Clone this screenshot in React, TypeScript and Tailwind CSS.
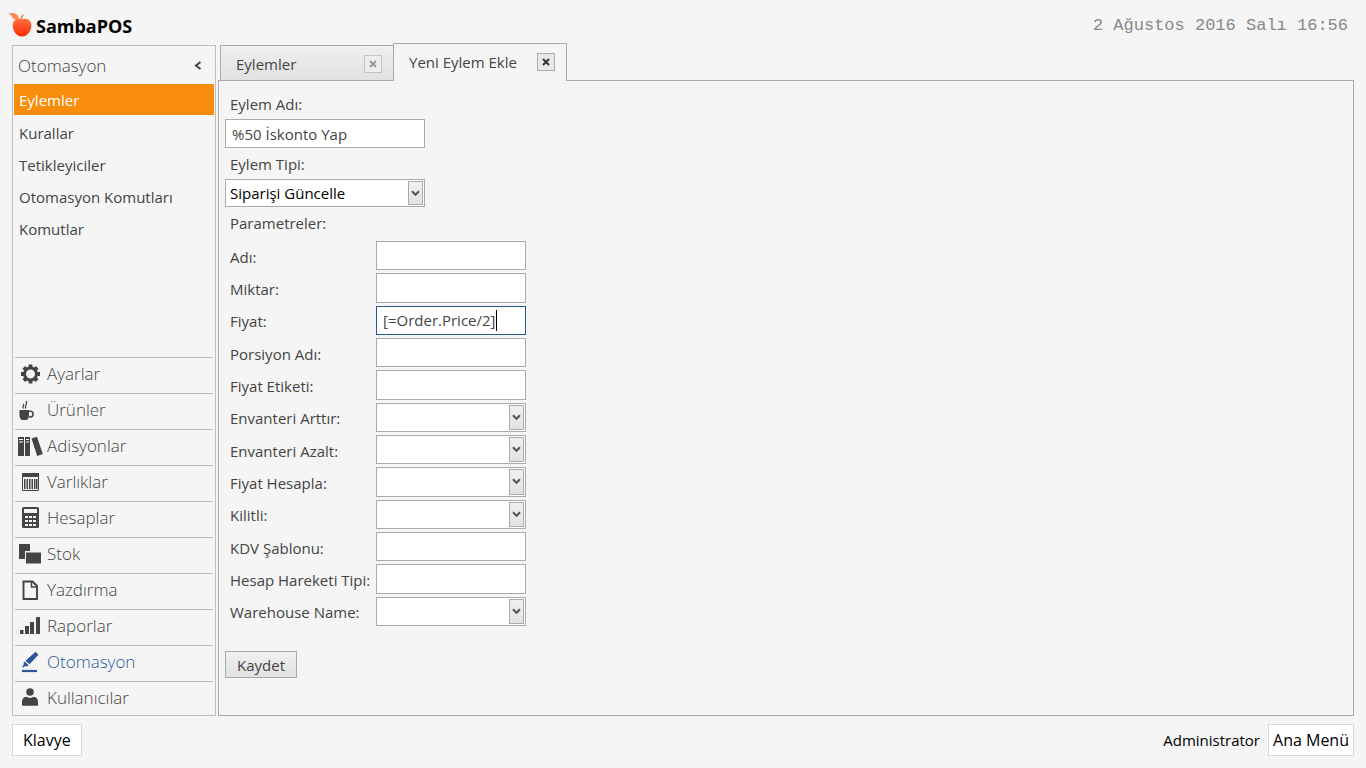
import { useState } from "react";
import type { ReactNode } from "react";

const menuItems = ["Eylemler", "Kurallar", "Tetikleyiciler", "Otomasyon Komutları", "Komutlar"];

const categories: { name: string; icon: ReactNode }[] = [
    {
        name: "Ayarlar",
        icon: (
            <>
                <circle cx="13.5" cy="12" r="6" fill="none" stroke="currentColor" strokeWidth="3" />
                <path
                    d="M13.5 2.500v3M13.5 18.500v3M4 12h3M20 12h3M6.800 5.300l2 2M18.200 16.700l2 2M6.800 18.700l2-2M18.200 7.300l2-2"
                    stroke="currentColor"
                    strokeWidth="3.800"
                />
            </>
        ),
    },
    {
        name: "Ürünler",
        icon: (
            <>
                <path d="M2.500 12H12v5.500q0 2.800-2 4.500H4.500q-2-1.700-2-4.500z" fill="currentColor" />
                <path d="M12 13.200h1.500a2.600 2.900 0 0 1 0 5.800H12" fill="none" stroke="currentColor" strokeWidth="1.500" />
                <path d="M6.500 10.500c-2.200-2 1.500-2.500-.2-4.500M9 10.500c-2.400-2.600 2-3.500.3-7.500" fill="none" stroke="currentColor" strokeWidth="1.300" />
            </>
        ),
    },
    {
        name: "Adisyonlar",
        icon: (
            <>
                <path d="M1 3h6v19H1zM8 3h5v19H8z" fill="currentColor" />
                <path d="M14.500 4.500l5.500-1.700L25.800 20l-5.600 2z" fill="currentColor" />
                <path d="M2 5.500h4M2 8h4M9 5.500h3M9 8h3" stroke="#f5f5f5" strokeWidth="1" />
            </>
        ),
    },
    {
        name: "Varlıklar",
        icon: (
            <>
                <path d="M5.500 3.500h16v17h-16z" fill="none" stroke="currentColor" strokeWidth="1" />
                <path d="M5 3h17v4H5z" fill="currentColor" />
                <path d="M7.750 9v10M10.250 9v10M12.750 9v10M15.250 9v10M17.750 9v10M19.750 9v10" stroke="currentColor" strokeWidth="1.500" />
            </>
        ),
    },
    {
        name: "Hesaplar",
        icon: (
            <>
                <rect x="5" y="1" width="17" height="21" rx="1.500" fill="currentColor" />
                <path
                    d="M7 3h13v4H7zM8 10h3v2H8zM12 10h3v2h-3zM16 10h3v2h-3zM8 14h3v2H8zM12 14h3v2h-3zM16 14h3v2h-3zM8 18h3v2H8zM12 18h3v2h-3zM16 18h3v2h-3z"
                    fill="#f5f5f5"
                />
            </>
        ),
    },
    {
        name: "Stok",
        icon: (
            <>
                <path d="M2 2h11v7H8v8H2z" fill="currentColor" />
                <path d="M9 10.500h15v11H9z" fill="currentColor" />
            </>
        ),
    },
    {
        name: "Yazdırma",
        icon: (
            <>
                <path d="M6.500 3.500h9L20 8v13H6.500z" fill="none" stroke="currentColor" strokeWidth="1.900" />
                <path d="M14.500 3.500V9H20" fill="none" stroke="currentColor" strokeWidth="1.500" />
            </>
        ),
    },
    {
        name: "Raporlar",
        icon: <path d="M3 16h3.500v4H3zM8 12h4v8H8zM13 8h4v12h-4zM19 3h4v17h-4z" fill="currentColor" />,
    },
    {
        name: "Otomasyon",
        icon: (
            <>
                <path d="M18.500 1.800l3 3-9 9.500-4-3.500z" fill="currentColor" />
                <path d="M7.800 11.600l3.800 3.600-1.400 1.200-1.700-.4-2.500 1.600-.8-.8 1.600-2.400-.2-1.600z" fill="currentColor" />
                <path d="M5 21h15" stroke="currentColor" strokeWidth="2.200" />
            </>
        ),
    },
    {
        name: "Kullanıcılar",
        icon: (
            <>
                <circle cx="13" cy="6" r="3.800" fill="currentColor" />
                <path d="M5 19.700v-3.700q0-4.500 4.200-5.200 3.800 2.200 7.600 0 4.200.7 4.200 5.200v3.700z" fill="currentColor" />
            </>
        ),
    },
];

const params = [
    { id: "adi", label: "Adı:", type: "text" },
    { id: "miktar", label: "Miktar:", type: "text" },
    { id: "fiyat", label: "Fiyat:", type: "text", active: true },
    { id: "porsiyon", label: "Porsiyon Adı:", type: "text" },
    { id: "etiket", label: "Fiyat Etiketi:", type: "text" },
    { id: "arttir", label: "Envanteri Arttır:", type: "select" },
    { id: "azalt", label: "Envanteri Azalt:", type: "select" },
    { id: "hesapla", label: "Fiyat Hesapla:", type: "select" },
    { id: "kilitli", label: "Kilitli:", type: "select" },
    { id: "kdv", label: "KDV Şablonu:", type: "text" },
    { id: "hareket", label: "Hesap Hareketi Tipi:", type: "text" },
    { id: "warehouse", label: "Warehouse Name:", type: "select" },
];

const Select = ({ id, options }: { id: string; options: string[] }) => (
    <div className="relative h-full w-full">
        <select id={id} className="block h-full w-full appearance-none border border-[#ababab] bg-white pl-1 pr-5 text-black outline-none">
            {options.map((o) => (
                <option key={o}>{o}</option>
            ))}
        </select>
        <span className="pointer-events-none absolute inset-y-0.5 right-0.5 flex w-[15px] items-center justify-center border border-[#ababab] bg-linear-to-b from-[#f0f0f0] to-[#e2e2e2]">
            <svg width="9" height="7" viewBox="0 0 9 7">
                <path d="M1 1.200l3.500 3.600L8 1.200" fill="none" stroke="#555" strokeWidth="2" />
            </svg>
        </span>
    </div>
);

const CloseButton = ({ muted }: { muted?: boolean }) => (
    <button
        aria-label="Kapat"
        className={
            muted
                ? "flex size-[18px] items-center justify-center border border-[#c4c4c4] bg-[#eee] text-[#999]"
                : "flex size-[18px] items-center justify-center border border-[#ababab] bg-[#e8e8e8] text-[#333]"
        }
    >
        <svg width="8" height="8" viewBox="0 0 8 8">
            <path d="M1 1l6 6M7 1L1 7" stroke="currentColor" strokeWidth="2" />
        </svg>
    </button>
);

export default function App() {
    const [name, setName] = useState("%50 İskonto Yap");
    const [price, setPrice] = useState("[=Order.Price/2]");

    return (
        <div className="flex min-h-screen flex-col bg-[#f5f5f5] px-3 pb-3 font-['Open_Sans',sans-serif] text-[15px] leading-5 text-[#444]">
            {/* Üst bölüm */}
            <header className="flex h-[43px] items-center justify-between pr-1.5 pt-2">
                <div className="-ml-1 flex items-center gap-1">
                    <svg width="24" height="26" viewBox="0 0 24 26">
                        <defs>
                            <linearGradient id="apple" x1="0" y1="0" x2="0" y2="1">
                                <stop offset="0" stopColor="#ff7040" />
                                <stop offset="1" stopColor="#fb2c06" />
                            </linearGradient>
                        </defs>
                        <path d="M.5 0c5-.8 9.500 0 10.500 6-4 1-6.500.2-7.500-3z" fill="#fa8a55" />
                        <path d="M13.500 7c-.6-2-.2-3.500 2-5" fill="none" stroke="#f4774a" strokeWidth="1.400" />
                        <path d="M14 6.500c4-2 9.300-.5 9.300 6 0 6-4 11-9.300 11s-9.200-5-9.200-11c0-6.500 5.200-8 9.200-6z" fill="url(#apple)" />
                    </svg>
                    <span className="text-[18px] font-bold text-black">SambaPOS</span>
                </div>
                <time className="pt-px font-['Liberation_Mono',monospace] text-[17px] text-[#888]">2 Ağustos 2016 Salı 16:56</time>
            </header>

            <div className="flex flex-1 gap-0.5">
                {/* Sol menü */}
                <aside className="mt-0.5 flex w-[204px] shrink-0 flex-col border border-[#bdbdbd] px-px">
                    <div className="flex h-[38px] items-center justify-between pl-1 pr-3">
                        <h2 className="pt-0.5 text-[17px] font-light">Otomasyon</h2>
                        <button aria-label="Daralt">
                            <svg width="8" height="9" viewBox="0 0 8 9">
                                <path d="M6.500 1L2 4.500 6.500 8" fill="none" stroke="#444" strokeWidth="2" />
                            </svg>
                        </button>
                    </div>
                    <nav className="flex flex-col">
                        {menuItems.map((item, i) => (
                            <a
                                key={item}
                                href="#"
                                className={
                                    i === 0
                                        ? "mb-0.5 flex h-[31px] items-center bg-[#f88c0b] pl-[5px] text-white"
                                        : "flex h-8 items-center pl-[5px]"
                                }
                            >
                                {item}
                            </a>
                        ))}
                    </nav>
                    <nav className="mt-auto flex flex-col px-px">
                        {categories.map((c) => (
                            <a
                                key={c.name}
                                href="#"
                                className={
                                    c.name === "Otomasyon"
                                        ? "flex h-9 items-start gap-1 border-t border-[#bdbdbd] pl-0.5 pt-1 text-[#2b579a]"
                                        : "flex h-9 items-start gap-1 border-t border-[#bdbdbd] pl-0.5 pt-1 last:h-[34px]"
                                }
                            >
                                <svg width="26" height="24" viewBox="0 0 26 24" className="shrink-0">
                                    {c.icon}
                                </svg>
                                <span className="text-[17px] font-light leading-6">{c.name}</span>
                            </a>
                        ))}
                    </nav>
                </aside>

                {/* Sekmeler ve form */}
                <main className="flex min-w-0 flex-1 flex-col">
                    <div className="flex items-end pl-0.5">
                        <div className="flex h-[35px] w-[173px] items-center justify-between border border-r-0 border-b-0 border-[#ababab] bg-linear-to-b from-[#efefef] to-[#e1e1e1] pl-[15px] pr-[11px] pt-0.5">
                            <button>Eylemler</button>
                            <CloseButton muted />
                        </div>
                        <div className="relative -mb-px flex h-[38px] w-[174px] items-center justify-between border border-b-0 border-[#ababab] bg-[#f5f5f5] pb-0.5 pl-[15px] pr-[11px]">
                            <button>Yeni Eylem Ekle</button>
                            <CloseButton />
                        </div>
                    </div>

                    <form className="flex-1 border border-[#ababab] px-1.5 pt-[13px]" onSubmit={(e) => e.preventDefault()}>
                        <label htmlFor="eylem-adi" className="block pl-[5px]">
                            Eylem Adı:
                        </label>
                        <input
                            id="eylem-adi"
                            value={name}
                            onChange={(e) => setName(e.target.value)}
                            className="mt-[5px] block h-[29px] w-[200px] border border-[#ababab] bg-white px-1.5 outline-none"
                        />
                        <label htmlFor="eylem-tipi" className="mt-1.5 block pl-[5px]">
                            Eylem Tipi:
                        </label>
                        <div className="mt-[5px] h-7 w-[200px]">
                            <Select id="eylem-tipi" options={["Siparişi Güncelle"]} />
                        </div>
                        <h3 className="mt-1.5 pl-[5px]">Parametreler:</h3>

                        <div className="mt-2 grid h-[385px] auto-rows-fr grid-cols-[146px_150px] gap-x-[5px] gap-y-[3px]">
                            {params.map((p) => (
                                <div key={p.id} className="col-span-2 grid grid-cols-subgrid">
                                    <label htmlFor={p.id} className="self-center whitespace-nowrap pl-[5px] pt-0.5">
                                        {p.label}
                                    </label>
                                    {p.type === "select" ? (
                                        <Select id={p.id} options={[""]} />
                                    ) : p.active ? (
                                        <div className="relative">
                                            <input
                                                id={p.id}
                                                value={price}
                                                onChange={(e) => setPrice(e.target.value)}
                                                className="block h-full w-full border border-[#2b579a] bg-white px-1.5 outline-none"
                                            />
                                            <span className="absolute inset-y-1 left-[120px] w-px bg-black" />
                                        </div>
                                    ) : (
                                        <input id={p.id} className="block h-full w-full border border-[#ababab] bg-white px-1.5 outline-none" />
                                    )}
                                </div>
                            ))}
                        </div>

                        <button className="mt-[25px] h-[27px] border border-[#ababab] bg-linear-to-b from-[#f0f0f0] to-[#e2e2e2] px-[11px]">
                            Kaydet
                        </button>
                    </form>
                </main>
            </div>

            {/* Alt bölüm */}
            <footer className="mt-2 flex items-center justify-between text-black">
                <button className="h-8 border border-[#d8d8d8] bg-white px-2.5 text-base">Klavye</button>
                <div className="flex items-center gap-2">
                    <span>Administrator</span>
                    <button className="h-8 border border-[#d8d8d8] bg-white px-1 text-base">Ana Menü</button>
                </div>
            </footer>
        </div>
    );
}
